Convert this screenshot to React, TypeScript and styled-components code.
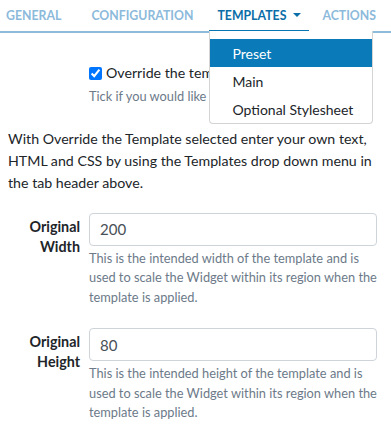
import React from "react";
import styled, { createGlobalStyle } from "styled-components";

const Global = createGlobalStyle`
  html, body { margin: 0; padding: 0; background: #fff; }
  body { font-family: Lato, "Open Sans", sans-serif; color: #212529; }
  * { box-sizing: border-box; }
`;

const Page = styled.div`
  width: 391px;
  height: 433px;
  overflow: hidden;
  position: relative;
`;

const Nav = styled.div`
  display: flex;
  align-items: flex-end;
  height: 33px;
  border-bottom: 2px solid #8dbcdb;
`;

const Tab = styled.div<{ $active?: boolean; $ml: number }>`
  position: relative;
  margin-left: ${(p) => p.$ml}px;
  padding: 0 8px 1px;
  height: 31px;
  display: flex;
  align-items: center;
  gap: 7px;
  font-size: 12.3px;
  font-weight: 700;
  color: ${(p) => (p.$active ? "#0b6ea8" : "#8cbadb")};
  border-bottom: 3px solid ${(p) => (p.$active ? "#0776b3" : "transparent")};
  margin-bottom: -2px;
`;

const Caret = styled.span`
  width: 0;
  height: 0;
  border-left: 4px solid transparent;
  border-right: 4px solid transparent;
  border-top: 4px solid currentColor;
  margin-top: -1px;
`;

const Menu = styled.div`
  position: absolute;
  top: 100%;
  left: 0;
  margin-top: 1px;
  width: 164px;
  background: #fff;
  border: 1px solid #d4d4d4;
  border-top: none;
  border-radius: 0 0 4px 4px;
  padding: 8px 0 0;
  z-index: 10;
`;

const MenuItem = styled.div<{ $active?: boolean }>`
  height: 28px;
  display: flex;
  align-items: center;
  padding-left: 22px;
  font-size: 14px;
  font-weight: 400;
  background: ${(p) => (p.$active ? "#0a7ab8" : "transparent")};
  color: ${(p) => (p.$active ? "#fff" : "#212529")};
`;

const Content = styled.div`
  padding: 29px 14px 0 8px;
`;

const FieldGrid = styled.div`
  display: grid;
  grid-template-columns: 72px 1fr;
  column-gap: 9px;
`;

const CheckRow = styled.label`
  grid-column: 2;
  display: flex;
  align-items: center;
  gap: 4px;
  font-size: 14.2px;
  line-height: 22px;
  white-space: nowrap;
  input {
    margin: 0;
    width: 13px;
    height: 13px;
  }
`;

const Help = styled.div`
  grid-column: 2;
  font-size: 12.8px;
  line-height: 19.5px;
  color: #6c7a89;
  margin-top: 3px;
  white-space: nowrap;
`;

const Para = styled.p`
  margin: 21px 0 0;
  font-size: 14.2px;
  line-height: 22px;
`;

const Row = styled(FieldGrid)<{ $top: number }>`
  margin-top: ${(p) => p.$top}px;
`;

const Label = styled.div`
  text-align: right;
  font-weight: 700;
  font-size: 14.3px;
  line-height: 20px;
  padding-top: 4px;
  color: #212529;
`;

const Field = styled.div`
  display: flex;
  flex-direction: column;
`;

const Input = styled.input`
  height: 33px;
  width: 100%;
  border: 1px solid #ced4da;
  border-radius: 4px;
  padding: 0 10px;
  font-family: inherit;
  font-size: 15px;
  color: #495057;
`;

const FieldHelp = styled.div`
  font-size: 12.8px;
  line-height: 19.5px;
  color: #6c7a89;
  margin-top: 3px;
`;

export default function App() {
  return (
    <Page>
      <Global />
      <Nav>
        <Tab $ml={-2}>GENERAL</Tab>
        <Tab $ml={14}>CONFIGURATION</Tab>
        <Tab $ml={8} $active>
          TEMPLATES <Caret />
          <Menu>
            <MenuItem $active>Preset</MenuItem>
            <MenuItem>Main</MenuItem>
            <MenuItem>Optional Stylesheet</MenuItem>
          </Menu>
        </Tab>
        <Tab $ml={5}>ACTIONS</Tab>
      </Nav>
      <Content>
        <FieldGrid>
          <CheckRow>
            <input type="checkbox" defaultChecked />
            Override the template?
          </CheckRow>
          <Help>Tick if you would like to override the template.</Help>
        </FieldGrid>
        <Para>
          With Override the Template selected enter your own text, HTML and CSS
          by using the Templates drop down menu in the tab header above.
        </Para>
        <Row $top={19}>
          <Label>
            Original
            <br />
            Width
          </Label>
          <Field>
            <Input defaultValue="200" />
            <FieldHelp>
              This is the intended width of the template and is used to scale
              the Widget within its region when the template is applied.
            </FieldHelp>
          </Field>
        </Row>
        <Row $top={21}>
          <Label>
            Original
            <br />
            Height
          </Label>
          <Field>
            <Input defaultValue="80" />
            <FieldHelp>
              This is the intended height of the template and is used to scale
              the Widget within its region when the template is applied.
            </FieldHelp>
          </Field>
        </Row>
      </Content>
    </Page>
  );
}
